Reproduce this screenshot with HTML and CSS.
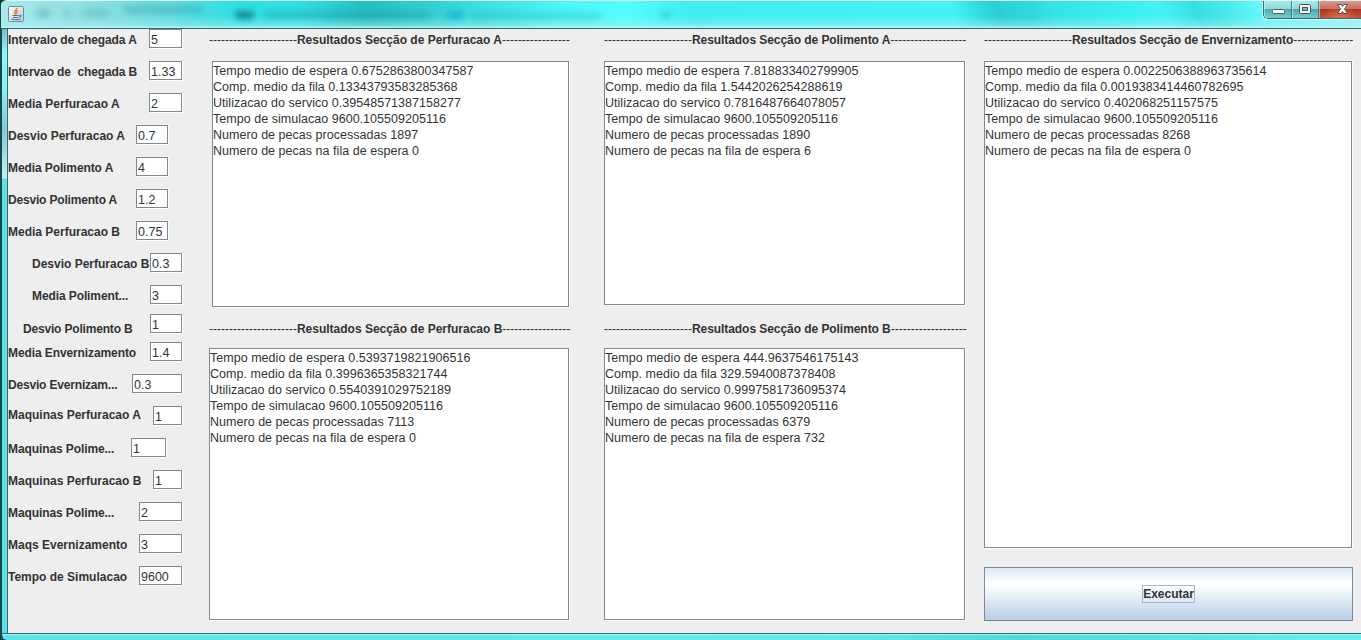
FILE: index.html
```
<!DOCTYPE html>
<html lang="pt">
<head>
<meta charset="utf-8">
<title>Simulacao</title>
<link rel="stylesheet" href="styles.css">
</head>
<body>
<div class="window">
  <header class="titlebar">
    <div class="smudges">
      <i class="s1"></i><i class="s2"></i><i class="s3"></i><i class="s4"></i><i class="s5"></i><i class="s6"></i><i class="s7"></i><i class="s8"></i><i class="s9"></i>
    </div>
    <svg class="java" width="16" height="16" viewBox="0 0 16 16">
      <defs><linearGradient id="jb" x1="0" y1="0" x2="1" y2="1"><stop offset="0" stop-color="#fff"/><stop offset="1" stop-color="#b9c9d6"/></linearGradient></defs>
      <rect x=".5" y=".5" width="15" height="15" rx="1" fill="url(#jb)" stroke="#6b8c9c"/>
      <path d="M8.600 2C9.400 4 5.800 4.800 6.500 6.800L7.700 8.500M10.300 4.500C8 5.500 8 6.300 8.800 8" fill="none" stroke="#ee8420" stroke-width="1.500"/>
      <path d="M4.500 9.500H10.500M5 11.500H10M11 9C14 8.500 13 11 10.800 11.500M3 13C5 14 10 14 12.500 13" fill="none" stroke="#47789c" stroke-width="1.100"/>
    </svg>
    <div class="controls">
      <div class="ctl min"><svg width="28" height="18" viewBox="0 0 28 18"><rect x="8.500" y="8.500" width="12" height="4" rx="1" fill="#fff" stroke="#47616b"/></svg></div>
      <div class="ctl max"><svg width="27" height="18" viewBox="0 0 27 18"><rect x="7.500" y="3.500" width="11" height="9" rx="1" fill="#fff" stroke="#47525f"/><rect x="10.500" y="6.500" width="5" height="3" fill="#62c4c4" stroke="#47525f"/></svg></div>
      <div class="ctl close"><svg width="42" height="18" viewBox="0 0 42 18"><path d="M18.500 3.500h3.500l1.500 2 1.500-2h3.500l-3 4.500 3 4.500h-3.500l-1.500-2-1.500 2h-3.500l3-4.500z" fill="#fff" stroke="#5a4e55"/></svg></div>
    </div>
  </header>
  <div class="edge"></div>
  <main class="content">
    <form class="params">
      <div class="row"><label>Intervalo de chegada A</label><span class="field w33">5</span></div>
      <div class="row"><label>Intervao de  chegada B</label><span class="field w33">1.33</span></div>
      <div class="row"><label class="wide">Media Perfuracao A</label><span class="field w33">2</span></div>
      <div class="row in14"><label class="wide">Desvio Perfuracao A</label><span class="field w32">0.7</span></div>
      <div class="row in14"><label>Media Polimento A</label><span class="field w32">4</span></div>
      <div class="row in14"><label class="tight">Desvio Polimento A</label><span class="field w32">1.2</span></div>
      <div class="row in14"><label class="wide">Media Perfuracao B</label><span class="field w32">0.75</span></div>
      <div class="row"><label class="l24 wide">Desvio Perfuracao B</label><span class="field w32">0.3</span></div>
      <div class="row h29"><label class="l24">Media Poliment...</label><span class="field w32">3</span></div>
      <div class="row h28"><label class="l15 low tight">Desvio Polimento B</label><span class="field w32">1</span></div>
      <div class="row"><label>Media Envernizamento</label><span class="field w32">1.4</span></div>
      <div class="row"><label class="tight">Desvio Evernizam...</label><span class="field w50">0.3</span></div>
      <div class="row"><label class="high wide">Maquinas Perfuracao A</label><span class="field w29">1</span></div>
      <div class="row in16"><label>Maquinas Polime...</label><span class="field w35">1</span></div>
      <div class="row"><label class="wide">Maquinas Perfuracao B</label><span class="field w29">1</span></div>
      <div class="row"><label>Maquinas Polime...</label><span class="field w43">2</span></div>
      <div class="row"><label class="wide">Maqs Evernizamento</label><span class="field w43">3</span></div>
      <div class="row"><label class="wide">Tempo de Simulacao</label><span class="field w43">9600</span></div>
    </form>
    <section class="col perf">
      <h2><s>----------------------</s><b>Resultados Secção de Perfuracao A</b><s>-----------------</s></h2>
      <div class="area a1"><p>Tempo medio de espera 0.6752863800347587</p><p>Comp. medio da fila 0.13343793583285368</p><p>Utilizacao do servico 0.39548571387158277</p><p>Tempo de simulacao 9600.105509205116</p><p>Numero de pecas processadas 1897</p><p>Numero de pecas na fila de espera 0</p></div>
      <h2><s>----------------------</s><b>Resultados Secção de Perfuracao B</b><s>-----------------</s></h2>
      <div class="area low-area"><p>Tempo medio de espera 0.5393719821906516</p><p>Comp. medio da fila 0.3996365358321744</p><p>Utilizacao do servico 0.5540391029752189</p><p>Tempo de simulacao 9600.105509205116</p><p>Numero de pecas processadas 7113</p><p>Numero de pecas na fila de espera 0</p></div>
    </section>
    <section class="col poli">
      <h2><s>----------------------</s><b>Resultados Secção de Polimento A</b><s>-------------------</s></h2>
      <div class="area a2"><p>Tempo medio de espera 7.818833402799905</p><p>Comp. medio da fila 1.5442026254288619</p><p>Utilizacao do servico 0.7816487664078057</p><p>Tempo de simulacao 9600.105509205116</p><p>Numero de pecas processadas 1890</p><p>Numero de pecas na fila de espera 6</p></div>
      <h2><s>----------------------</s><b>Resultados Secção de Polimento B</b><s>-------------------</s></h2>
      <div class="area low-area"><p>Tempo medio de espera 444.9637546175143</p><p>Comp. medio da fila 329.5940087378408</p><p>Utilizacao do servico 0.9997581736095374</p><p>Tempo de simulacao 9600.105509205116</p><p>Numero de pecas processadas 6379</p><p>Numero de pecas na fila de espera 732</p></div>
    </section>
    <section class="col env">
      <h2><s>----------------------</s><b>Resultados Secção de Envernizamento</b><s>---------------</s></h2>
      <div class="area a3"><p>Tempo medio de espera 0.0022506388963735614</p><p>Comp. medio da fila 0.0019383414460782695</p><p>Utilizacao do servico 0.402068251157575</p><p>Tempo de simulacao 9600.105509205116</p><p>Numero de pecas processadas 8268</p><p>Numero de pecas na fila de espera 0</p></div>
      <button class="run" type="button"><span>Executar</span></button>
    </section>
  </main>
  <footer class="bottom"></footer>
</div>
</body>
</html>
```
FILE: styles.css
```
* { box-sizing: border-box; }
html, body { margin: 0; overflow: hidden; }
body { width: 1361px; height: 640px; background: #123c42; font: 12px/16px "Liberation Sans", Arial, sans-serif; color: #333; }

.window {
  width: 1361px; height: 640px; overflow: hidden;
  display: grid; grid-template: 29px 604px 7px / 8px 1353px;
  border-radius: 7px 0 0 7px;
}
.titlebar {
  grid-column: 1 / 3; position: relative; display: flex; justify-content: space-between;
  border-top: 1px solid #d8ffff; border-bottom: 1px solid #2b686d; border-left: 1px solid #16494c;
  background:
    linear-gradient(to bottom, transparent 55%, rgba(170,240,240,.45) 90%, #b9f7f7 100%),
    linear-gradient(65deg, transparent 0 870px, rgba(30,190,195,.6) 910px, transparent 960px 1060px, rgba(30,200,205,.5) 1090px, transparent 1150px),
    linear-gradient(90deg, #a9e9ea 0, #8edfe2 90px, #63dadd 170px, #2ee0e4 235px, #30dfe3 300px, #25bfc3 365px, #35d3d6 440px, #4cf7f8 560px, #55fdfd 625px, #3feef1 690px, #44f3f6 950px, #32e0e4 1030px, #3bf0f3 1130px, #5cf7f9 1240px, #a5f4f4 1361px);
}
.smudges { position: absolute; inset: 0; overflow: hidden; filter: blur(3px); }
.smudges i { position: absolute; height: 8px; top: 8px; border-radius: 4px; background: #238e98; opacity: .35; }
.smudges .s1 { left: 35px; width: 15px; }
.smudges .s2 { left: 62px; width: 8px; opacity: .25; }
.smudges .s3 { left: 80px; width: 28px; opacity: .25; }
.smudges .s4 { left: 123px; width: 80px; height: 5px; top: 6px; opacity: .45; }
.smudges .s5 { left: 234px; width: 19px; top: 10px; background: #0b5665; opacity: .65; }
.smudges .s6 { left: 263px; width: 167px; top: 10px; opacity: .35; }
.smudges .s7 { left: 446px; width: 17px; top: 10px; background: #109bd5; opacity: .6; }
.smudges .s8 { left: 470px; width: 130px; top: 11px; opacity: .22; }
.smudges .s9 { left: 660px; width: 10px; top: 10px; opacity: .35; }
.java { position: relative; margin: 5px 0 0 7px; }
.controls {
  position: relative; display: flex; height: 18px; width: 98px;
  border: solid #376e70; border-width: 0 0 1px 1px; border-radius: 0 0 0 5px;
  box-shadow: -1px 1px 0 rgba(220,255,255,.8); overflow: visible;
}
.ctl { height: 17px; border-right: 1px solid #3c7b7d; background: linear-gradient(#a9e9ea 0, #8fd9da 45%, #4fa9ab 50%, #71cfd0 100%); box-shadow: inset 1px 0 0 rgba(220,255,255,.5); }
.ctl svg { display: block; }
.min { width: 28px; border-radius: 0 0 0 4px; }
.max { width: 27px; }
.close { width: 42px; border: 0; background: radial-gradient(ellipse at 50% 110%, rgba(240,140,90,.6), transparent 60%), linear-gradient(#dc9a8b 0, #c9705d 45%, #a93620 50%, #c4523a 100%); }

.edge { border-left: 2px solid #16494c; border-right: 1px solid #2e7074; background: linear-gradient(#7fb9c9 0, #8ff4f4 22px, #8cf0f0 60px, #86c9d2 100px, #c4eff0 149px, #5ee0e4 150px); }
.bottom { grid-column: 1 / 3; border-left: 2px solid #16494c; background: linear-gradient(#2f6a70 0 1px, #a5f5f5 1px 2px, transparent 2px), linear-gradient(90deg, #5fe4e9, #66eaf0 60%, #55d5dc 75%, #66ebf0 95%); border-radius: 0 0 0 6px; }

.content { display: flex; background: #eee; }
.params { width: 174px; margin: 0; }
.row { height: 32px; display: flex; justify-content: space-between; align-items: flex-start; }
.h29 { height: 29px; }
.h28 { height: 28px; }
.in14 { padding-right: 14px; }
.in16 { padding-right: 16px; }
label { font-weight: bold; white-space: pre; margin-top: 3px; letter-spacing: -.1px; }
label.wide { letter-spacing: 0; }
label.tight { letter-spacing: -.18px; }
.l24 { margin-left: 24px; }
.l15 { margin-left: 15px; }
.low { margin-top: 7px; }
.high { margin-top: 1px; }
.field, .area { background: #fff; border: 1px solid #7a8a99; box-shadow: 1px 1px 0 #fff; font-size: 12.5px; }
.field { flex: none; height: 19px; padding: 2px 0 0 1px; }
.w29 { width: 29px; } .w32 { width: 32px; } .w33 { width: 33px; }
.w35 { width: 35px; } .w43 { width: 43px; } .w50 { width: 50px; }

.col { display: flex; flex-direction: column; }
.perf { margin-left: 27px; width: 361px; }
.poli { margin-left: 34px; width: 362px; }
.env { margin-left: 18px; width: 369px; }
h2 { font-size: 12px; line-height: 16px; height: 16px; margin: 3px 0 13px; display: flex; white-space: nowrap; font-weight: normal; }
h2 s { text-decoration: none; }
.poli b, .env b { letter-spacing: -.06px; }
.area { letter-spacing: .03px; padding-top: 1px; }
.area p { margin: 0; white-space: nowrap; }
.a1 { margin-left: 3px; width: 357px; height: 246px; margin-bottom: 11px; }
.a2 { width: 361px; height: 244px; margin-bottom: 13px; }
.a1 + h2, .a2 + h2 { margin-bottom: 11px; }
.low-area { width: 360px; height: 272px; }
.poli .low-area { width: 361px; }
.a3 { width: 368px; height: 487px; margin-bottom: 19px; }
.run { width: 369px; height: 54px; padding: 0; border: 1px solid #7a8a99; font: bold 12px/16px "Liberation Sans", Arial, sans-serif; color: #333; background: linear-gradient(#dde8f3 0, #fff 30%, #fff 32%, #b8cfe5 100%); }
.run span { display: block; width: 53px; margin: 0 auto; border: 1px solid #a3b8cc; height: 18px; line-height: 17px; }
```
